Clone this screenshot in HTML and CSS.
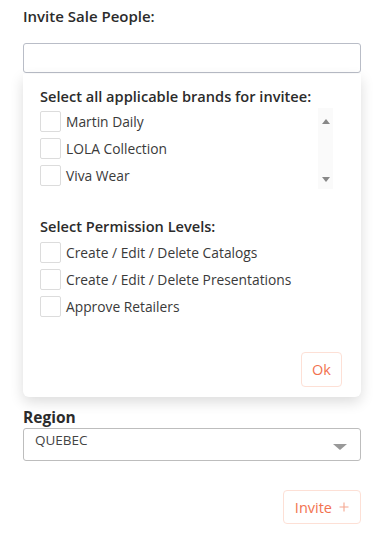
FILE: index.html
```html
<!doctype html>
<html lang="en">
<head>
    <meta charset="utf-8">
    <title>Invite Sale People</title>
    <link rel="stylesheet" href="styles.css">
</head>
<body>
<div class="page">
    <div class="field-title">Invite Sale People:</div>
    <input class="text-input" type="text">
    <div class="popover">
        <div class="group-title">Select all applicable brands for invitee:</div>
        <div class="brand-box">
            <div class="brand-list">
                <label class="check-row"><span class="check"></span>Martin Daily</label>
                <label class="check-row"><span class="check"></span>LOLA Collection</label>
                <label class="check-row"><span class="check"></span>Viva Wear</label>
            </div>
            <div class="scroll-track">
                <span class="arrow-up"></span>
                <span class="arrow-down"></span>
            </div>
        </div>
        <div class="group-title perm-title">Select Permission Levels:</div>
        <div class="perm-list">
            <label class="check-row"><span class="check"></span>Create / Edit / Delete Catalogs</label>
            <label class="check-row"><span class="check"></span>Create / Edit / Delete Presentations</label>
            <label class="check-row"><span class="check"></span>Approve Retailers</label>
        </div>
        <div class="popover-foot">
            <button class="btn-outline btn-ok">Ok</button>
        </div>
    </div>
    <div class="region-label">Region</div>
    <div class="select">
        <span class="select-value">QUEBEC</span>
        <span class="select-caret"></span>
    </div>
    <div class="actions">
        <button class="btn-outline btn-invite">Invite
            <svg class="plus" width="10" height="10" viewBox="0 0 10 10"><path d="M5 0.5V9.5M0.5 5H9.5" stroke="#f5a690" stroke-width="1.1" fill="none"/></svg>
        </button>
    </div>
</div>
</body>
</html>
```

FILE: styles.css
```css
body {
	margin: 0;
	font-family: "Open Sans", "Noto Sans", sans-serif;
	color: #333;
	background: #fff;
}
.page {
	padding: 5px 29px 0 23px;
}
.field-title {
	font-size: 15px;
	font-weight: 600;
	line-height: 22px;
	color: #2b2b2b;
}
.text-input {
	display: block;
	box-sizing: border-box;
	width: 100%;
	height: 30px;
	margin: 16px 0 0 0;
	border: 1px solid #b9bdc7;
	border-radius: 3px;
	background: #fff;
}
.popover {
	margin-top: 1px;
	padding: 11px 19px 10px 17px;
	background: #fff;
	border-radius: 0 0 6px 6px;
	box-shadow: 0 5px 14px rgba(0, 0, 0, 0.14);
}
.group-title {
	font-size: 14.6px;
	font-weight: 600;
	line-height: 22px;
	color: #2b2b2b;
}
.perm-title {
	margin-top: 26px;
}
.brand-box {
	display: flex;
	height: 81px;
	margin: 1px 9px 0 0;
}
.brand-list {
	flex: 1;
}
.perm-list {
	margin-top: 2px;
}
.check-row {
	display: flex;
	align-items: center;
	height: 27px;
	font-size: 13.8px;
	color: #3a3a3a;
}
.check {
	box-sizing: border-box;
	width: 21px;
	height: 21px;
	margin-right: 5px;
	border: 1px solid #dcdcdc;
	border-radius: 2px;
}
.scroll-track {
	display: flex;
	flex-direction: column;
	justify-content: space-between;
	align-items: center;
	width: 15px;
	padding: 11px 0 7px;
	box-sizing: border-box;
	background: #fafafa;
}
.arrow-up {
	border-left: 4px solid transparent;
	border-right: 4px solid transparent;
	border-bottom: 5px solid #888;
}
.arrow-down {
	border-left: 4px solid transparent;
	border-right: 4px solid transparent;
	border-top: 5px solid #888;
}
.popover-foot {
	display: flex;
	justify-content: flex-end;
	margin-top: 32px;
}
.btn-outline {
	font-family: "Open Sans", "Noto Sans", sans-serif;
	font-size: 14.5px;
	color: #f2724f;
	background: #fff;
	border: 1px solid #fde0d6;
	border-radius: 4px;
	cursor: pointer;
}
.btn-ok {
	width: 41px;
	height: 35px;
	padding: 0;
}
.region-label {
	margin-top: 10px;
	font-size: 15.5px;
	font-weight: 700;
	line-height: 20px;
	color: #2b2b2b;
}
.select {
	display: flex;
	justify-content: space-between;
	box-sizing: border-box;
	height: 33px;
	margin-top: 1px;
	padding: 2px 13px 0 11px;
	border: 1px solid #bdbdbd;
	border-radius: 3px;
}
.select-value {
	font-size: 13.5px;
	color: #444;
}
.select-caret {
	margin-top: 13px;
	border-left: 7px solid transparent;
	border-right: 7px solid transparent;
	border-top: 6px solid #999;
	height: 0;
}
.actions {
	display: flex;
	justify-content: flex-end;
	margin-top: 29px;
}
.btn-invite {
	display: flex;
	align-items: center;
	height: 34px;
	padding: 0 11px;
}
.plus {
	margin-left: 7px;
}
```
